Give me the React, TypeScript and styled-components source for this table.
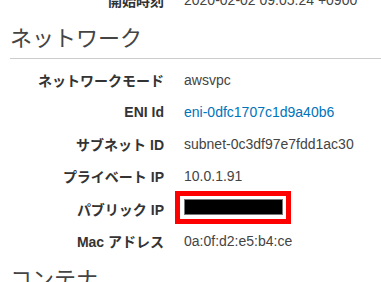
import React from 'react';
import styled, { createGlobalStyle } from 'styled-components';

const GlobalStyle = createGlobalStyle`
  html, body {
    margin: 0;
    padding: 0;
    background: #ffffff;
    overflow: hidden;
  }
  body {
    font-family: "Liberation Sans", Arial, "Noto Sans CJK JP", sans-serif;
    color: #444444;
  }
`;

const Page = styled.div`
  margin-top: -16px;
  width: 381px;
`;

const Section = styled.section`
  display: flex;
  flex-direction: column;
`;

const Heading = styled.h2`
  margin: 0 0 5px 10px;
  padding: 8px 0 4px 0;
  font-family: "Liberation Sans", Arial, "Noto Sans CJK JP", sans-serif;
  font-weight: normal;
  font-size: 22px;
  line-height: 30px;
  color: #444444;
  border-bottom: 1px solid #cccccc;
`;

const Table = styled.dl`
  margin: 0;
  display: grid;
  grid-template-columns: 164px 1fr;
  column-gap: 20px;
`;

const Row = styled.div`
  display: contents;
`;

const Label = styled.dt<{ $tall?: boolean }>`
  height: ${({ $tall }) => ($tall ? '33px' : '32px')};
  display: flex;
  align-items: center;
  justify-content: flex-end;
  font-weight: bold;
  font-size: 14px;
  color: #333333;
  white-space: nowrap;
`;

const Value = styled.dd<{ $link?: boolean; $tall?: boolean }>`
  margin: 0;
  height: ${({ $tall }) => ($tall ? '33px' : '32px')};
  display: flex;
  align-items: center;
  font-size: 14px;
  color: ${({ $link }) => ($link ? '#0073bb' : '#444444')};
  white-space: nowrap;
`;

const Redacted = styled.div`
  margin: 0 0 3px -9px;
  width: 106px;
  height: 23px;
  border: 5px solid #ff0000;
  display: flex;
  align-items: center;
  justify-content: center;
  background: #ffffff;
`;

const Blackout = styled.div`
  width: 97px;
  height: 14px;
  background: #000000;
  border: 1px solid #777777;
`;

type Item = { label: string; value?: string; link?: boolean; hidden?: boolean };

const general: Item[] = [{ label: '開始時刻', value: '2020-02-02 09:05:24 +0900' }];

const network: Item[] = [
  { label: 'ネットワークモード', value: 'awsvpc' },
  { label: 'ENI Id', value: 'eni-0dfc1707c1d9a40b6', link: true },
  { label: 'サブネット ID', value: 'subnet-0c3df97e7fdd1ac30' },
  { label: 'プライベート IP', value: '10.0.1.91' },
  { label: 'パブリック IP', hidden: true },
  { label: 'Mac アドレス', value: '0a:0f:d2:e5:b4:ce' },
];

const Rows = ({ items }: { items: Item[] }) => (
  <Table>
    {items.map((it) => (
      <Row key={it.label}>
        <Label $tall={it.hidden}>{it.label}</Label>
        <Value $link={it.link} $tall={it.hidden}>
          {it.hidden ? (
            <Redacted>
              <Blackout />
            </Redacted>
          ) : (
            it.value
          )}
        </Value>
      </Row>
    ))}
  </Table>
);

export default function App() {
  return (
    <Page>
      <GlobalStyle />
      <Rows items={general} />
      <Section>
        <Heading>ネットワーク</Heading>
        <Rows items={network} />
      </Section>
      <Section>
        <Heading>コンテナ</Heading>
      </Section>
    </Page>
  );
}
